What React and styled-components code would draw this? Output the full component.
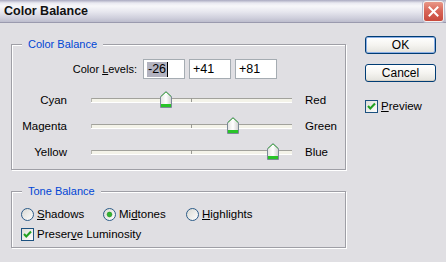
import React from 'react';
import styled, { createGlobalStyle } from 'styled-components';

const GlobalStyle = createGlobalStyle`
  html, body {
    margin: 0;
    padding: 0;
    background: #e0dfe3;
  }
  body {
    font-family: "Liberation Sans", Arial, sans-serif;
  }
`;

const Window = styled.div`
  width: 446px;
  height: 262px;
  background: #e0dfe3;
  font-family: "Liberation Sans", Arial, sans-serif;
  font-size: 11px;
  color: #000;
  display: flex;
  flex-direction: column;
  overflow: hidden;
`;

const TitleBar = styled.div`
  height: 22px;
  flex-shrink: 0;
  border-bottom: 1px solid #9a9aae;
  display: flex;
  align-items: center;
  justify-content: space-between;
  padding: 0 2px 0 4px;
  background: linear-gradient(
    to bottom,
    #a9a9c0 0px,
    #e9e9f1 3px,
    #f7f7fa 6px,
    #e6e6ee 12px,
    #cfcfdc 18px,
    #bdbdcd 22px
  );
`;

const Title = styled.span`
  font-weight: bold;
  font-size: 12.5px;
  color: #111;
`;

const CloseButton = styled.div`
  width: 19px;
  height: 19px;
  border: 1px solid #f4f1f1;
  border-radius: 3px;
  background: linear-gradient(to bottom, #e99888 0%, #d9675a 45%, #c8493c 100%);
  box-shadow: 0 0 0 1px #b9b9cb;
  display: flex;
  align-items: center;
  justify-content: center;
`;

const Body = styled.div`
  display: flex;
  padding: 13px 0 0 11px;
`;

const Main = styled.div`
  display: flex;
  flex-direction: column;
  gap: 21px;
  padding-top: 8px;
  width: 335px;
`;

const Group = styled.div`
  position: relative;
  box-sizing: border-box;
  width: 335px;
  border: 1px solid #9f9fa6;
  box-shadow: inset 1px 1px 0 #fff, 1px 1px 0 #fff;
  padding: ${p => p.$padding};
  display: flex;
  flex-direction: column;
  gap: ${p => p.$gap || 0}px;
`;

const GroupLabel = styled.span`
  position: absolute;
  top: -7px;
  left: 10px;
  padding: 0 6px;
  line-height: 13px;
  background: #e0dfe3;
  color: #0046d5;
`;

const LevelsRow = styled.div`
  display: flex;
  align-items: center;
  height: 20px;
  margin-bottom: 8px;
`;

const LevelsLabel = styled.span`
  width: 125px;
  text-align: right;
  margin-right: 6px;
`;

const Fields = styled.div`
  display: flex;
  gap: 4px;
`;

const Field = styled.div`
  box-sizing: border-box;
  width: 42px;
  height: 20px;
  background: #fff;
  border: 1px solid #a5acb2;
  display: flex;
  align-items: center;
  padding-left: 3px;
  font-size: 12.5px;
`;

const Selected = styled.span`
  background: #b3b3c0;
  line-height: 15px;
  padding: 0 1px;
`;

const Caret = styled.span`
  width: 1px;
  height: 15px;
  background: #000;
`;

const SliderRow = styled.div`
  display: flex;
  align-items: center;
  height: 26px;
`;

const SideLabel = styled.span`
  width: ${p => p.$width}px;
  text-align: ${p => p.$align};
  margin-left: ${p => p.$offset || 0}px;
  font-size: 11.5px;
`;

const Track = styled.div`
  position: relative;
  box-sizing: border-box;
  width: 201px;
  height: 4px;
  margin-left: 24px;
  background: #f4f3e9;
  border-top: 1px solid #a2a29c;
  border-left: 1px solid #b8b8b0;
  box-shadow: 0 1px 0 #fff;
`;

const Tick = styled.div`
  position: absolute;
  left: 99px;
  top: -1px;
  width: 1px;
  height: 4px;
  background: #9a9a94;
`;

const Thumb = styled.svg`
  position: absolute;
  top: -8px;
  width: 12px;
  height: 17px;
  transform: translateX(-50%);
`;

const Side = styled.div`
  display: flex;
  flex-direction: column;
  margin-left: 19px;
`;

const Button = styled.div`
  box-sizing: border-box;
  width: 71px;
  height: 18px;
  border: 1px solid #003c74;
  border-radius: 3px;
  background: linear-gradient(to bottom, #ffffff 0%, #f5f4f0 50%, #e3e2dc 100%);
  box-shadow: ${p => (p.$default ? 'inset 0 0 0 1px #8cb0e6' : 'inset 0 -1px 0 #d6d0c5')};
  display: flex;
  align-items: center;
  justify-content: center;
  font-size: 12px;
  margin-bottom: ${p => p.$spacing}px;
`;

const Option = styled.label`
  display: flex;
  align-items: center;
  gap: 3px;
  height: 13px;
  width: ${p => (p.$width ? `${p.$width}px` : 'auto')};
`;

const OptionText = styled.span`
  font-size: 11.5px;
  line-height: 13px;
`;

const OptionRow = styled.div`
  display: flex;
  align-items: center;
`;

const BoxIcon = styled.svg`
  width: 13px;
  height: 13px;
  flex-shrink: 0;
`;

const CheckBox = () => (
  <BoxIcon viewBox="0 0 13 13">
    <defs>
      <linearGradient id="cbfill" x1="0" y1="0" x2="1" y2="1">
        <stop offset="0" stopColor="#dcdcd6" />
        <stop offset="1" stopColor="#ffffff" />
      </linearGradient>
    </defs>
    <rect x="0.5" y="0.5" width="12" height="12" fill="url(#cbfill)" stroke="#1c5180" />
    <path d="M3 6 L5.3 8.4 L10 3.6" fill="none" stroke="#21a121" strokeWidth="2.1" />
  </BoxIcon>
);

const Radio = ({ checked }) => (
  <BoxIcon viewBox="0 0 13 13">
    <defs>
      <linearGradient id="rdfill" x1="0" y1="0" x2="1" y2="1">
        <stop offset="0" stopColor="#d8d8d2" />
        <stop offset="1" stopColor="#ffffff" />
      </linearGradient>
    </defs>
    <circle cx="6.5" cy="6.5" r="6" fill="url(#rdfill)" stroke="#2b5a87" />
    {checked && <circle cx="6.5" cy="6.5" r="2.4" fill="#2fb52f" stroke="#1d8c1d" strokeWidth="0.6" />}
  </BoxIcon>
);

const SliderThumb = ({ value }) => (
  <Thumb viewBox="0 0 12 17" style={{ left: `${((value + 100) / 200) * 100}%` }}>
    <defs>
      <linearGradient id="thumbfill" x1="0" y1="0" x2="1" y2="0">
        <stop offset="0" stopColor="#e2e2e0" />
        <stop offset="0.5" stopColor="#ffffff" />
        <stop offset="1" stopColor="#cfcfcf" />
      </linearGradient>
    </defs>
    <path d="M0.5 5.5 L6 0.5 L11.5 5.5 L11.5 16.5 L0.5 16.5 Z" fill="url(#thumbfill)" stroke="#7c8a96" />
    <path d="M1 5.5 L6 1 L11 5.5" fill="none" stroke="#55b755" strokeWidth="1" />
    <rect x="1" y="13" width="10" height="3" fill="#28c428" />
  </Thumb>
);

const sliders = [
  { left: 'Cyan', right: 'Red', value: -26 },
  { left: 'Magenta', right: 'Green', value: 41 },
  { left: 'Yellow', right: 'Blue', value: 81 },
];

const App = () => {
  return (
    <Window>
      <GlobalStyle />
      <TitleBar>
        <Title>Color Balance</Title>
        <CloseButton>
          <svg width="11" height="11" viewBox="0 0 11 11">
            <path d="M1.5 1.5 L9.5 9.5 M9.5 1.5 L1.5 9.5" stroke="#fff" strokeWidth="2" strokeLinecap="square" />
          </svg>
        </CloseButton>
      </TitleBar>
      <Body>
        <Main>
          <Group $padding="14px 0 4px 0">
            <GroupLabel>Color Balance</GroupLabel>
            <LevelsRow>
              <LevelsLabel>Color <u>L</u>evels:</LevelsLabel>
              <Fields>
                <Field><Selected>-26</Selected><Caret /></Field>
                <Field>+41</Field>
                <Field>+81</Field>
              </Fields>
            </LevelsRow>
            {sliders.map(s => (
              <SliderRow key={s.left}>
                <SideLabel $width={55} $align="right">{s.left}</SideLabel>
                <Track>
                  <Tick />
                  <SliderThumb value={s.value} />
                </Track>
                <SideLabel $width={40} $align="left" $offset={13}>{s.right}</SideLabel>
              </SliderRow>
            ))}
          </Group>
          <Group $padding="16px 0 6px 9px" $gap={7}>
            <GroupLabel>Tone Balance</GroupLabel>
            <OptionRow>
              <Option $width={82}><Radio /><OptionText><u>S</u>hadows</OptionText></Option>
              <Option $width={83}><Radio checked /><OptionText>Mi<u>d</u>tones</OptionText></Option>
              <Option><Radio /><OptionText><u>H</u>ighlights</OptionText></Option>
            </OptionRow>
            <OptionRow>
              <Option><CheckBox /><OptionText>Preser<u>v</u>e Luminosity</OptionText></Option>
            </OptionRow>
          </Group>
        </Main>
        <Side>
          <Button $default $spacing={10}>OK</Button>
          <Button $spacing={18}>Cancel</Button>
          <Option><CheckBox /><OptionText><u>P</u>review</OptionText></Option>
        </Side>
      </Body>
    </Window>
  );
};

export default App;
